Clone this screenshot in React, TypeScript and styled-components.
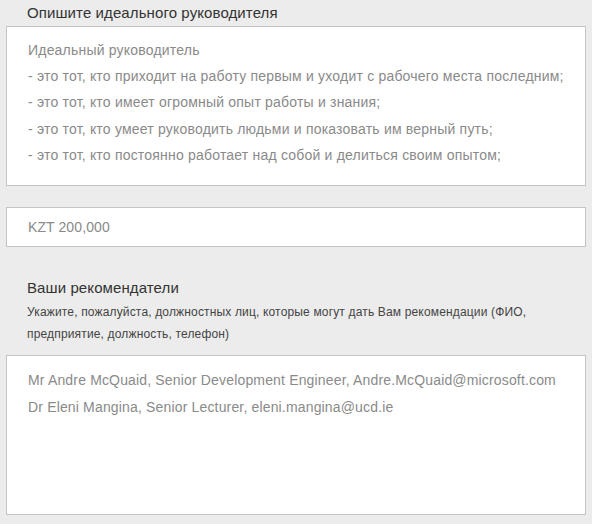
import React from "react";
import styled, { createGlobalStyle } from "styled-components";

const Global = createGlobalStyle`
  html, body { margin: 0; padding: 0; background: #ececec; }
  body { font-family: "Liberation Sans", Arial, sans-serif; }
`;

const Page = styled.div`
  width: 592px;
  height: 524px;
  box-sizing: border-box;
  padding: 0 6px;
  background: #ececec;
  display: flex;
  flex-direction: column;
`;

const Label = styled.div<{ $top: number }>`
  margin-top: ${(p) => p.$top}px;
  padding-left: 21px;
  font-size: 15px;
  letter-spacing: 0.1px;
  line-height: 20px;
  color: #333;
`;

const Hint = styled.div`
  margin-top: 3px;
  padding-left: 21px;
  padding-right: 40px;
  font-size: 12px;
  letter-spacing: 0.16px;
  line-height: 22px;
  color: #444;
`;

const Field = styled.div<{ $height: number; $top: number; $padTop: number; $lh: number; $ls: number }>`
  box-sizing: border-box;
  height: ${(p) => p.$height}px;
  margin-top: ${(p) => p.$top}px;
  background: #fff;
  border: 1px solid #c4c4c4;
  padding: ${(p) => p.$padTop}px 20px 0 21px;
  font-size: 14px;
  letter-spacing: ${(p) => p.$ls}px;
  line-height: ${(p) => p.$lh}px;
  color: #8a8a8a;
  white-space: pre;
`;

const Line = styled.div``;

const leader = [
  "Идеальный руководитель",
  "- это тот, кто приходит на работу первым и уходит с рабочего места последним;",
  "- это тот, кто имеет огромный опыт работы и знания;",
  "- это тот, кто умеет руководить людьми и показовать им верный путь;",
  "- это тот, кто постоянно работает над собой и делиться своим опытом;",
];

const refs = [
  "Mr Andre McQuaid, Senior Development Engineer, Andre.McQuaid@microsoft.com",
  "Dr Eleni Mangina, Senior Lecturer, eleni.mangina@ucd.ie",
];

export default function App() {
  return (
    <>
      <Global />
      <Page>
        <Label $top={3}>Опишите идеального руководителя</Label>
        <Field $height={160} $top={3} $padTop={10} $lh={26.2} $ls={0.2}>
          {leader.map((l) => (
            <Line key={l}>{l}</Line>
          ))}
        </Field>
        <Field $height={40} $top={21} $padTop={9} $lh={20} $ls={0.1}>
          KZT 200,000
        </Field>
        <Label $top={31}>Ваши рекомендатели</Label>
        <Hint>
          Укажите, пожалуйста, должностных лиц, которые могут дать Вам рекомендации (ФИО, предприятие, должность, телефон)
        </Hint>
        <Field $height={160} $top={10} $padTop={11} $lh={27} $ls={0.16}>
          {refs.map((l) => (
            <Line key={l}>{l}</Line>
          ))}
        </Field>
      </Page>
    </>
  );
}
